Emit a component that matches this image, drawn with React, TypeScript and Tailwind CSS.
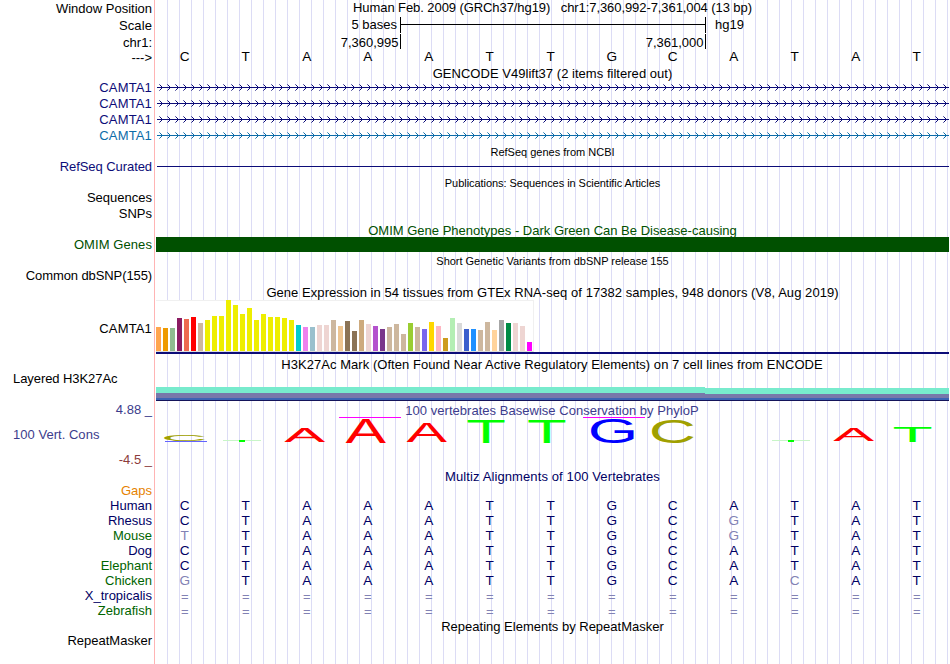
import type { ReactNode } from "react"
import { clsx } from "clsx"

const GTEX: [number, string][] = [
  [24, "#ffa54f"], [23, "#ee9a00"], [23, "#8fbc8f"], [33, "#8b1c62"], [32, "#ee6a50"], [34, "#ff0000"],
  [28, "#cdb79e"], [31, "#eeee00"], [35, "#eeee00"], [35, "#eeee00"], [51, "#eeee00"], [46, "#eeee00"],
  [37, "#eeee00"], [43, "#eeee00"], [31, "#eeee00"], [37, "#eeee00"], [34, "#eeee00"], [34, "#eeee00"],
  [33, "#eeee00"], [31, "#eeee00"], [26, "#00cdcd"], [24, "#ee82ee"], [24, "#9ac0cd"], [26, "#eed5d2"],
  [26, "#eed5d2"], [31, "#cdb79e"], [25, "#eec591"], [30, "#8b7355"], [20, "#8b7355"], [31, "#cdaa7d"],
  [27, "#eed5d2"], [25, "#b452cd"], [22, "#7a378b"], [24, "#cdb79e"], [27, "#cdb79e"], [17, "#cdb79e"],
  [28, "#9acd32"], [24, "#cdb79e"], [22, "#7a67ee"], [29, "#ffd700"], [25, "#ffb6c1"], [13, "#cd9b1d"],
  [33, "#b4eeb4"], [28, "#d9d9d9"], [22, "#3a5fcd"], [22, "#1e90ff"], [21, "#cdb79e"], [29, "#cdb79e"],
  [21, "#ffd39b"], [31, "#a6a6a6"], [28, "#008b45"], [28, "#eed5d2"], [25, "#eed5d2"], [9, "#ff00ff"],
]

const REFERENCE = "CTAAATTGCATAT"

const SPECIES = [
  { name: "Human", bases: "CTAAATTGCATAT", color: "text-[#000064]" },
  { name: "Rhesus", bases: "CTAAATTGCGTAT", color: "text-[#000064]" },
  { name: "Mouse", bases: "TTAAATTGCGTAT", color: "text-[#006400]" },
  { name: "Dog", bases: "CTAAATTGCATAT", color: "text-[#000064]" },
  { name: "Elephant", bases: "CTAAATTGCATAT", color: "text-[#006400]" },
  { name: "Chicken", bases: "GTAAATTGCACAT", color: "text-[#006400]" },
  { name: "X_tropicalis", bases: "=============", color: "text-[#000064]" },
  { name: "Zebrafish", bases: "=============", color: "text-[#006400]" },
]

// glyph boxes at font-size 100: left, width, bottom, height
const GLYPHS: Record<string, [number, number, number, number]> = {
  A: [0.2, 66.3, 0, 68.8],
  C: [5, 62.7, 1, 70.8],
  G: [5, 66.6, 1, 70.8],
  T: [2.1, 56.9, 0, 68.8],
}

const LOGO_COLORS: Record<string, string> = { A: "#ff0000", C: "#a0a000", G: "#0000ff", T: "#00ff00" }

// letter, x, y, width, height inside the conservation track
const LOGO: [string, number, number, number, number][] = [
  ["C", 8.3, 33, 40.4, 7],
  ["A", 128.3, 27, 40.7, 14],
  ["A", 189.7, 18, 40.3, 24],
  ["A", 250.7, 22, 40.3, 19],
  ["T", 311.7, 19, 37, 23],
  ["T", 372.3, 19, 37, 23],
  ["G", 435, 18, 43.3, 24.5],
  ["C", 496, 19, 41, 23.5],
  ["A", 677.3, 27, 40.7, 13],
  ["T", 738, 26, 37.5, 15],
]

interface RowProps {
  height: string
  label?: ReactNode
  labelClass?: string
  children?: ReactNode
}

function Row({ height, label, labelClass, children }: RowProps) {
  return (
    <div className={clsx("flex shrink-0", height)}>
      <div className={clsx("w-[154px] shrink-0 pr-[2px] text-right", labelClass)}>{label}</div>
      <div className="ml-[2px] w-[793px] shrink-0">{children}</div>
    </div>
  )
}

function Title({ children, className }: { children: ReactNode; className?: string }) {
  return <div className={clsx("text-center", className)}>{children}</div>
}

function Bases({ bases, compare }: { bases: string; compare?: boolean }) {
  return (
    <div className="flex">
      {bases.split("").map((b, i) => (
        <span
          key={i}
          className={clsx(
            "w-[61px] pr-[3.5px] text-center",
            b === "=" ? "pt-px" : "text-[13.6px] leading-[16px]",
            compare && (b === REFERENCE[i] ? "text-[#000064]" : "text-[#8282b4]")
          )}
        >
          {b}
        </span>
      ))}
    </div>
  )
}

function Intron({ color }: { color: string }) {
  return (
    <svg width="793" height="16" className="block" shapeRendering="crispEdges">
      <rect x="1" y="7" width="792" height="1" fill={color} />
      {Array.from({ length: 99 }, (_, i) => {
        const x = 3 + i * 8
        return (
          <g key={i} fill={color}>
            <rect x={x + 2} y="6" width="1" height="3" />
            <rect x={x + 1} y="5" width="1" height="1" />
            <rect x={x + 1} y="9" width="1" height="1" />
            <rect x={x} y="4" width="1" height="1" opacity="0.6" />
            <rect x={x} y="10" width="1" height="1" opacity="0.6" />
          </g>
        )
      })}
    </svg>
  )
}

function Conservation() {
  return (
    <svg width="793" height="68" className="absolute left-0 top-0">
      <g shapeRendering="crispEdges">
        <rect x="9" y="40" width="42" height="1" fill="#6464ff" />
        <rect x="67" y="39" width="38" height="1" fill="#c8f5c8" />
        <rect x="83" y="39" width="6" height="2" fill="#00ff00" />
        <rect x="616" y="39" width="38" height="1" fill="#c8f5c8" />
        <rect x="632" y="39" width="6" height="2" fill="#00ff00" />
        <rect x="183" y="16" width="62" height="1" fill="#ff00ff" />
        <rect x="427" y="16" width="62" height="1" fill="#ff00ff" />
      </g>
      {LOGO.map(([letter, x, y, w, h], i) => {
        const [left, gw, bottom, gh] = GLYPHS[letter]
        const sx = w / gw
        const sy = h / gh
        return (
          <text
            key={i}
            fontSize="100"
            fill={LOGO_COLORS[letter]}
            transform={`translate(${x - left * sx} ${y + h - bottom * sy}) scale(${sx} ${sy})`}
          >
            {letter}
          </text>
        )
      })}
    </svg>
  )
}

export default function App() {
  return (
    <div className="relative h-[664px] w-[950px] overflow-hidden bg-white font-['Liberation_Sans',Arial,sans-serif] text-[13px] leading-[16px] whitespace-pre text-black">
      {/* guide lines */}
      <div className="absolute inset-y-0 left-[154px] w-px bg-[#ffb4b4]" />
      <div className="absolute inset-y-0 left-[156px] w-[793px] bg-[linear-gradient(90deg,transparent_11px,#dcdcf5_11px)] bg-[length:12px_100%]" />

      <div className="relative flex flex-col">
        <Row height="h-[17px]" label="Window Position" labelClass="pt-px">
          <Title className="tracking-[-0.08px]">Human Feb. 2009 (GRCh37/hg19)   chr1:7,360,992-7,361,004 (13 bp)</Title>
        </Row>
        <Row height="h-[17px]" label="Scale" labelClass="pt-px tracking-[0.1px]">
          <div className="flex">
            <span className="w-[244px] pr-[3px] text-right">5 bases</span>
            <div className="flex h-[16px] w-[306px] flex-col border-x border-black pt-[7px]">
              <div className="h-px bg-black" />
            </div>
            <span className="pl-[9px]">hg19</span>
          </div>
        </Row>
        <Row height="h-[15px]" label="chr1:" labelClass="pt-px">
          <div className="flex h-[15px]">
            <span className="w-[245px] border-r border-black pt-px pr-[1.5px] text-right">7,360,995</span>
            <span className="w-[305px] border-r border-black pt-px pr-[1.5px] text-right">7,361,000</span>
          </div>
        </Row>
        <Row height="h-[17px]" label="--->" labelClass="pt-px">
          <Bases bases={REFERENCE} />
        </Row>

        <Row height="h-[14px]">
          <Title className="tracking-[0.03px]">GENCODE V49lift37 (2 items filtered out)</Title>
        </Row>
        {[0, 1, 2].map((i) => (
          <Row key={i} height="h-[16px]" label="CAMTA1" labelClass="tracking-[0.15px] text-[#0c0c78]">
            <Intron color="#0c0c78" />
          </Row>
        ))}
        <Row height="h-[16px]" label="CAMTA1" labelClass="tracking-[0.15px] text-[#0c6ca8]">
          <Intron color="#0c6ca8" />
        </Row>

        <Row height="h-[15px]">
          <Title className="text-[11px]">RefSeq genes from NCBI</Title>
        </Row>
        <Row height="h-[16px]" label="RefSeq Curated" labelClass="tracking-[-0.07px] text-[#0c0c78]">
          <div className="mt-[7px] ml-px h-px bg-[#0c0c78]" />
        </Row>
        <Row height="h-[15px]">
          <Title className="text-[11px] tracking-[-0.05px]">Publications: Sequences in Scientific Articles</Title>
        </Row>
        <Row height="h-[16px]" label="Sequences" />
        <Row height="h-[16px]" label="SNPs" />

        <Row height="h-[15px]">
          <Title className="pt-px text-[#005000]">OMIM Gene Phenotypes - Dark Green Can Be Disease-causing</Title>
        </Row>
        <Row height="h-[15px]" label="OMIM Genes" labelClass="tracking-[0.08px] text-[#005000]">
          <div className="h-full bg-[#005000]" />
        </Row>
        <Row height="h-[16px]">
          <Title className="pt-px text-[11px] tracking-[-0.02px]">Short Genetic Variants from dbSNP release 155</Title>
        </Row>
        <Row height="h-[16px]" label="Common dbSNP(155)" labelClass="tracking-[-0.1px]" />

        <Row height="h-[16px]">
          <Title className="pt-px tracking-[0.055px]">Gene Expression in 54 tissues from GTEx RNA-seq of 17382 samples, 948 donors (V8, Aug 2019)</Title>
        </Row>
        <Row height="h-[54px]" label="CAMTA1" labelClass="pt-[21px] tracking-[0.15px]">
          <div className="flex h-[52px] w-[378px] items-end gap-[2px] border border-l-0 border-[#f0f0f0] border-b-[#dcdcdc] bg-white">
            {GTEX.map(([h, color], i) => (
              <div
                key={i}
                className={clsx("w-[5px] shrink-0", h > 50 && "-mt-px")}
                style={{ height: h, backgroundColor: color }}
              />
            ))}
          </div>
          <div className="h-[2px] bg-[#0c0c78]" />
        </Row>

        <Row height="h-[17px]">
          <Title className="pt-[3px] pr-px tracking-[0.045px]">H3K27Ac Mark (Often Found Near Active Regulatory Elements) on 7 cell lines from ENCODE</Title>
        </Row>
        <Row height="h-[30px]" label="Layered H3K27Ac" labelClass="pl-[13px] text-left! tracking-[-0.07px]">
          <div className="flex h-[30px] items-end">
            <div className="w-[549px]">
              <div className="h-[6px] bg-[#78ebcd]" />
              <div className="h-[5px] bg-[#7878aa]" />
              <div className="h-[2px] bg-[#3c64b4]" />
              <div className="h-px bg-[#14145a]" />
            </div>
            <div className="flex-1">
              <div className="h-[6px] bg-[#78ebcd]" />
              <div className="h-[4px] bg-[#7878aa]" />
              <div className="h-[2px] bg-[#3c64b4]" />
              <div className="h-px bg-[#14145a]" />
            </div>
          </div>
        </Row>

        <Row
          height="h-[68px]"
          labelClass="pt-px text-[#3c3c8c]"
          label={
            <>
              <div>4.88 _</div>
              <div className="mt-[9px] pl-[13px] text-left tracking-[0.03px]">100 Vert. Cons</div>
              <div className="mt-[9px] text-[#8c3c3c]">-4.5 _</div>
            </>
          }
        >
          <div className="relative">
            <Title className="pt-[2px] pr-px tracking-[0.03px] text-[#3c3c8c]">100 vertebrates Basewise Conservation by PhyloP</Title>
            <Conservation />
          </div>
        </Row>

        <Row height="h-[14px]">
          <Title className="tracking-[0.11px] text-[#000064]">Multiz Alignments of 100 Vertebrates</Title>
        </Row>
        <Row height="h-[15px]" label="Gaps" labelClass="text-[#e68200]" />
        {SPECIES.map((s) => (
          <Row key={s.name} height="h-[15px]" label={s.name} labelClass={s.color}>
            <Bases bases={s.bases} compare />
          </Row>
        ))}

        <Row height="h-[15px]">
          <Title className="pt-px">Repeating Elements by RepeatMasker</Title>
        </Row>
        <Row height="h-[31px]" label="RepeatMasker" />
      </div>
    </div>
  )
}
